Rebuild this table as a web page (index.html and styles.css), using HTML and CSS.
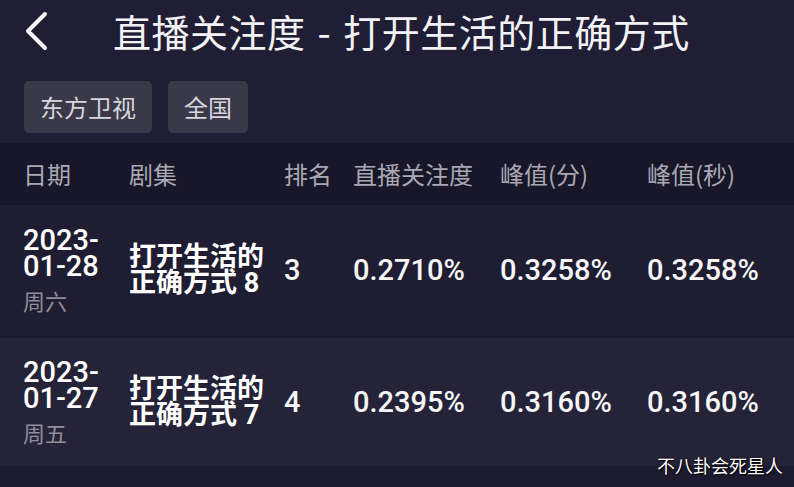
FILE: index.html
```html
<!DOCTYPE html>
<html lang="zh-CN">
<head>
<meta charset="utf-8">
<title>直播关注度</title>
<link rel="stylesheet" href="styles.css">
</head>
<body>
<div class="page">
  <header class="topbar">
    <svg class="back" width="24" height="40" viewBox="0 0 24 40" aria-hidden="true">
      <polyline points="20,3 3,20 20,37" fill="none" stroke="#f4f4f6" stroke-width="4" stroke-linecap="round" stroke-linejoin="round"/>
    </svg>
    <h1 class="title">直播关注度 - 打开生活的正确方式</h1>
  </header>
  <div class="chips">
    <span class="chip">东方卫视</span>
    <span class="chip">全国</span>
  </div>
  <div class="grid thead">
    <div>日期</div>
    <div>剧集</div>
    <div>排名</div>
    <div>直播关注度</div>
    <div>峰值(分)</div>
    <div>峰值(秒)</div>
  </div>
  <div class="grid row row1">
    <div class="date"><span class="d">2023-</span><span class="d">01-28</span><span class="wk">周六</span></div>
    <div class="name"><span class="ln">打开生活的</span><span class="ln">正确方式 8</span></div>
    <div class="num">3</div>
    <div class="num">0.2710%</div>
    <div class="num">0.3258%</div>
    <div class="num">0.3258%</div>
  </div>
  <div class="grid row row2">
    <div class="date"><span class="d">2023-</span><span class="d">01-27</span><span class="wk">周五</span></div>
    <div class="name"><span class="ln">打开生活的</span><span class="ln">正确方式 7</span></div>
    <div class="num">4</div>
    <div class="num">0.2395%</div>
    <div class="num">0.3160%</div>
    <div class="num">0.3160%</div>
  </div>
  <div class="footer"></div>
  <div class="watermark">不八卦会死星人</div>
</div>
</body>
</html>
```

FILE: styles.css
```css
html, body {
  margin: 0;
  padding: 0;
  background: #1f1d30;
}
.page {
  position: relative;
  width: 794px;
  height: 487px;
  overflow: hidden;
  background: #201e34;
  font-family: "Noto Sans CJK SC", "Noto Sans", sans-serif;
  color: #f2f2f4;
}
.topbar {
  display: flex;
  align-items: center;
  height: 62px;
  padding-left: 25px;
}
.back {
  flex: none;
}
.title {
  margin: 0 0 0 64px;
  font-size: 38px;
  font-weight: 400;
  letter-spacing: 0.5px;
  word-spacing: 3px;
  line-height: 1;
  color: #f3f3f5;
  white-space: nowrap;
}
.chips {
  display: flex;
  gap: 16px;
  padding: 19px 24px 0;
}
.chip {
  display: flex;
  align-items: center;
  height: 52px;
  padding: 0 16px;
  border-radius: 5px;
  background: #3a3949;
  color: #d6d6dc;
  font-size: 24px;
  line-height: 1;
}
.grid {
  display: grid;
  grid-template-columns: 106px 155px 69px 147px 147px 1fr;
  padding-left: 23px;
  align-items: center;
}
.thead {
  margin-top: 10px;
  height: 62px;
  background: #18172a;
  color: #a9a8b3;
  font-size: 24px;
  line-height: 1;
}
.row {
  height: 130px;
}
.row1 {
  background: #1f1d32;
  border-bottom: 3px solid #1c1a2e;
}
.row2 {
  height: 128px;
  background: #252338;
}
.date {
  display: flex;
  flex-direction: column;
}
.d {
  font-family: "Roboto", "Noto Sans", sans-serif;
  font-weight: 500;
  font-size: 29px;
  line-height: 26px;
  color: #ffffff;
}
.wk {
  margin-top: 8px;
  font-size: 22px;
  line-height: 26px;
  color: #8f8e99;
}
.name {
  display: flex;
  flex-direction: column;
  font-family: "Roboto", "Noto Sans CJK SC", sans-serif;
  font-size: 27px;
  font-weight: 700;
  line-height: 26px;
  color: #ffffff;
}
.num {
  font-family: "Roboto", "Noto Sans", sans-serif;
  font-weight: 500;
  font-size: 29px;
  line-height: 1;
  color: #f6f6f8;
}
.footer {
  height: 22px;
  background: #1d1b30;
}
.watermark {
  position: absolute;
  right: 11px;
  bottom: 13px;
  font-size: 18px;
  line-height: 1;
  color: #ffffff;
  text-shadow: 0 0 2px #000, 1px 1px 1px #000;
}
```
